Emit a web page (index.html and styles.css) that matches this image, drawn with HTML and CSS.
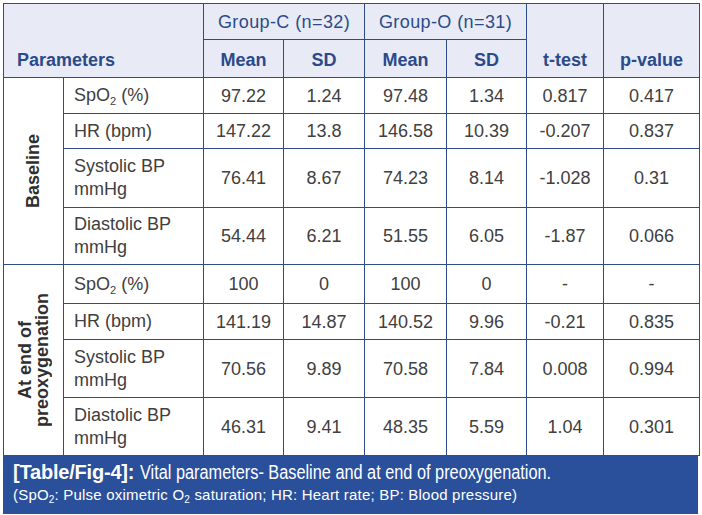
FILE: index.html
```html
<!DOCTYPE html>
<html>
<head>
<meta charset="utf-8">
<link rel="stylesheet" href="styles.css">
</head>
<body>
<div class="figure">
<table class="vitals">
<colgroup>
<col class="c-sec"><col class="c-par"><col class="c-mc"><col class="c-sc"><col class="c-mo"><col class="c-so"><col class="c-t"><col class="c-p">
</colgroup>
<thead>
<tr class="h-group">
<th class="par-head" colspan="2" rowspan="2">Parameters</th>
<th class="grp" colspan="2">Group-C (n=32)</th>
<th class="grp" colspan="2">Group-O (n=31)</th>
<th class="bot" rowspan="2">t-test</th>
<th class="bot" rowspan="2">p-value</th>
</tr>
<tr class="h-sub">
<th>Mean</th><th>SD</th><th>Mean</th><th>SD</th>
</tr>
</thead>
<tbody>
<tr class="r-a">
<th class="sec" rowspan="4"><div class="vert">Baseline</div></th>
<td class="par">SpO<sub>2</sub> (%)</td><td>97.22</td><td>1.24</td><td>97.48</td><td>1.34</td><td>0.817</td><td>0.417</td>
</tr>
<tr class="r-b">
<td class="par">HR (bpm)</td><td>147.22</td><td>13.8</td><td>146.58</td><td>10.39</td><td>-0.207</td><td>0.837</td>
</tr>
<tr class="r-c">
<td class="par">Systolic BP<br>mmHg</td><td>76.41</td><td>8.67</td><td>74.23</td><td>8.14</td><td>-1.028</td><td>0.31</td>
</tr>
<tr class="r-d">
<td class="par">Diastolic BP<br>mmHg</td><td>54.44</td><td>6.21</td><td>51.55</td><td>6.05</td><td>-1.87</td><td>0.066</td>
</tr>
<tr class="r-e">
<th class="sec" rowspan="4"><div class="vert">At end of<br>preoxygenation</div></th>
<td class="par">SpO<sub>2</sub> (%)</td><td>100</td><td>0</td><td>100</td><td>0</td><td>-</td><td>-</td>
</tr>
<tr class="r-f">
<td class="par">HR (bpm)</td><td>141.19</td><td>14.87</td><td>140.52</td><td>9.96</td><td>-0.21</td><td>0.835</td>
</tr>
<tr class="r-g">
<td class="par">Systolic BP<br>mmHg</td><td>70.56</td><td>9.89</td><td>70.58</td><td>7.84</td><td>0.008</td><td>0.994</td>
</tr>
<tr class="r-h">
<td class="par">Diastolic BP<br>mmHg</td><td>46.31</td><td>9.41</td><td>48.35</td><td>5.59</td><td>1.04</td><td>0.301</td>
</tr>
</tbody>
</table>
<div class="caption">
<p class="cap-title"><b class="cap-label">[Table/Fig-4]:</b> <span class="cap-text">Vital parameters- Baseline and at end of preoxygenation.</span></p>
<p class="cap-note">(SpO<sub>2</sub>: Pulse oximetric O<sub>2</sub> saturation; HR: Heart rate; BP: Blood pressure)</p>
</div>
</div>
</body>
</html>
```
FILE: styles.css
```css
html, body {
  margin: 0;
  padding: 0;
  background: #ffffff;
}
.figure {
  padding: 3px 0 0 3px;
  width: 696px;
  font-family: "Liberation Sans", Arial, sans-serif;
}
.vitals {
  border-collapse: collapse;
  table-layout: fixed;
  width: 696px;
  font-size: 18px;
  color: #404040;
}
.c-sec { width: 60px; }
.c-par { width: 140px; }
.c-mc { width: 80px; }
.c-sc { width: 81px; }
.c-mo { width: 82px; }
.c-so { width: 80px; }
.c-t { width: 77px; }
.c-p { width: 96px; }

.vitals th, .vitals td {
  border: 1px solid #2d4c88;
  padding: 0;
  text-align: center;
  vertical-align: middle;
  line-height: 22px;
}
.vitals thead th {
  background: #e8ebf5;
  color: #2b4a8b;
  font-weight: bold;
}
.vitals thead th.grp {
  font-weight: normal;
  letter-spacing: 0.4px;
  vertical-align: middle;
}
.vitals thead th.par-head {
  text-align: left;
  vertical-align: bottom;
  padding: 0 0 6px 13px;
}
.vitals thead th.bot {
  vertical-align: bottom;
  padding-bottom: 6px;
}
.h-group { height: 36px; }
.h-sub { height: 38px; }
.h-sub th { padding-top: 2px; }
.r-a { height: 36px; }
.r-b { height: 35px; }
.r-c { height: 59px; }
.r-d { height: 57px; }
.r-e { height: 39px; }
.r-f { height: 36px; }
.r-g { height: 58px; }
.r-h { height: 58px; }

.vitals td.par {
  text-align: left;
  padding-left: 10px;
  line-height: 23px;
}
.vitals sub {
  font-size: 11px;
  vertical-align: -4px;
  line-height: 0;
}
.vitals th.sec {
  background: #ffffff;
  color: #2f2f2f;
  font-weight: bold;
}
.vert {
  writing-mode: vertical-rl;
  transform: rotate(180deg);
  margin: 0 auto;
  line-height: 17px;
  text-align: center;
}

.caption {
  background: #2a4f9b;
  color: #ffffff;
  width: 695px;
  height: 58px;
  box-sizing: border-box;
  padding: 4px 0 0 10px;
}
.caption p {
  margin: 0;
  white-space: nowrap;
}
.cap-title {
  font-size: 20px;
  line-height: 24px;
}
.cap-label {
  display: inline-block;
  letter-spacing: -0.2px;
}
.cap-text {
  display: inline-block;
  transform: scaleX(0.815);
  transform-origin: left center;
}
.cap-note {
  font-size: 15px;
  line-height: 22px;
  letter-spacing: 0.2px;
}
.cap-note sub {
  font-size: 10px;
  vertical-align: -3px;
  line-height: 0;
}
```
